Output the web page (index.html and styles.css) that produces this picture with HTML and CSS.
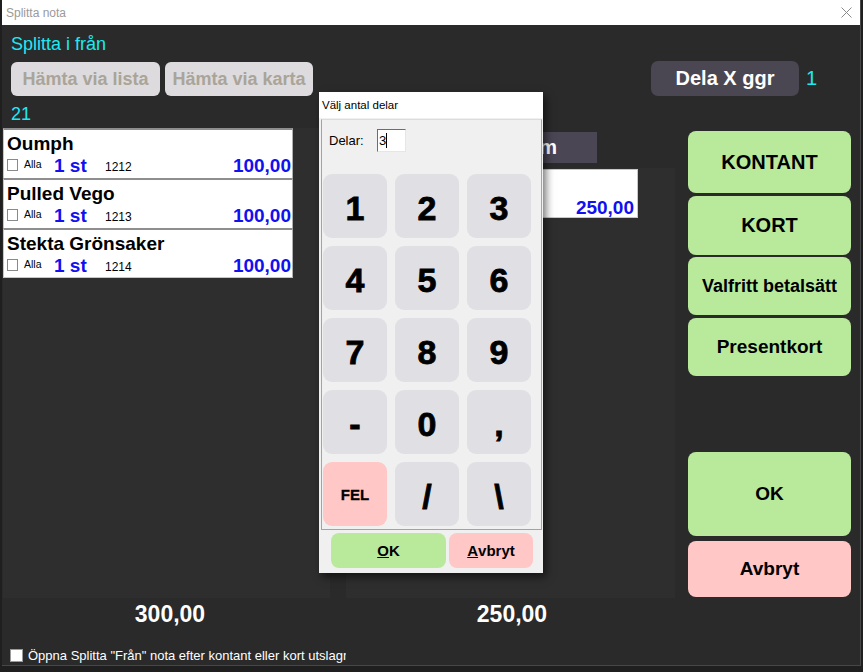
FILE: index.html
```html
<!DOCTYPE html>
<html lang="sv">
<head>
<meta charset="utf-8">
<title>Splitta nota</title>
<link rel="stylesheet" href="styles.css">
</head>
<body>
<div class="window">
  <div class="titlebar">
    <span class="win-title">Splitta nota</span>
    <svg class="close" width="11" height="11" viewBox="0 0 11 11"><path d="M0.5 0.5 L10.5 10.5 M10.5 0.5 L0.5 10.5" stroke="#8a8a8a" stroke-width="1" fill="none"/></svg>
  </div>

  <div class="header">
    <div class="hdr-title">Splitta i från</div>
    <div class="hdr-row">
      <div class="fetch">
        <div class="fetch-btn w1">Hämta via lista</div>
        <div class="fetch-btn w2">Hämta via karta</div>
      </div>
      <div class="dela-wrap">
        <div class="dela-btn">Dela X ggr</div>
        <span class="dela-count">1</span>
      </div>
    </div>
    <div class="count">21</div>
  </div>

  <div class="main">
    <div class="col-left">
      <div class="list">
        <div class="item">
          <div class="item-name">Oumph</div>
          <div class="item-row">
            <span class="chk"></span><span class="alla">Alla</span><span class="qty">1 st</span><span class="code">1212</span><span class="price">100,00</span>
          </div>
        </div>
        <div class="item">
          <div class="item-name">Pulled Vego</div>
          <div class="item-row">
            <span class="chk"></span><span class="alla">Alla</span><span class="qty">1 st</span><span class="code">1213</span><span class="price">100,00</span>
          </div>
        </div>
        <div class="item last">
          <div class="item-name">Stekta Grönsaker</div>
          <div class="item-row">
            <span class="chk"></span><span class="alla">Alla</span><span class="qty">1 st</span><span class="code">1214</span><span class="price">100,00</span>
          </div>
        </div>
      </div>
    </div>

    <div class="col-mid">
      <div class="tab">Till rum</div>
      <div class="mid-panel">
        <div class="mid-item"><span class="price">250,00</span></div>
      </div>
    </div>

    <div class="col-right">
      <div class="pay green b1">KONTANT</div>
      <div class="pay green b2">KORT</div>
      <div class="pay green b3">Valfritt betalsätt</div>
      <div class="pay green b4">Presentkort</div>
      <div class="pay green b5">OK</div>
      <div class="pay pink b6">Avbryt</div>
    </div>
  </div>

  <div class="totals">
    <div class="total t1">300,00</div>
    <div class="total t2">250,00</div>
  </div>

  <div class="footer">
    <span class="fchk"></span>
    <span class="ftext">Öppna Splitta "Från" nota efter kontant eller kort utslagning</span>
  </div>

  <div class="dialog">
    <div class="dlg-title">Välj antal delar</div>
    <div class="dlg-body">
      <div class="group">
        <div class="delar-row">
          <span class="delar-label">Delar:</span>
          <span class="delar-input">3<span class="caret"></span></span>
        </div>
        <div class="keypad">
          <div class="key">1</div>
          <div class="key">2</div>
          <div class="key">3</div>
          <div class="key">4</div>
          <div class="key">5</div>
          <div class="key">6</div>
          <div class="key">7</div>
          <div class="key">8</div>
          <div class="key">9</div>
          <div class="key">-</div>
          <div class="key">0</div>
          <div class="key">,</div>
          <div class="key fel">FEL</div>
          <div class="key">/</div>
          <div class="key">\</div>
        </div>
      </div>
      <div class="dlg-buttons">
        <div class="dlg-btn ok"><u>O</u>K</div>
        <div class="dlg-btn cancel"><u>A</u>vbryt</div>
      </div>
    </div>
  </div>
</div>
</body>
</html>
```
FILE: styles.css
```css
* { box-sizing: border-box; }
body {
  margin: 0;
  width: 863px;
  height: 672px;
  overflow: hidden;
  background: #1f1f1f;
  font-family: "Liberation Sans", Arial, sans-serif;
}
.window {
  position: relative;
  margin-left: 2px;
  width: 859px;
  height: 666px;
  background: #2a2a2a;
  border-right: 1px solid #474747;
  border-bottom: 1px solid #474747;
}
.titlebar {
  height: 25px;
  background: #fff;
  display: flex;
  align-items: center;
  padding: 0 8px 0 4px;
}
.win-title {
  font-size: 12px;
  color: #9a9a9a;
}
.close { margin-left: auto; }

/* header */
.header {
  height: 103px;
  padding: 9px 0 0 9px;
}
.hdr-title, .count {
  font-size: 18px;
  line-height: 20px;
  color: #1ee8f2;
}
.hdr-row {
  display: flex;
  align-items: flex-start;
  margin-top: 7px;
}
.fetch {
  display: flex;
  gap: 5px;
  margin-top: 1px;
}
.fetch-btn {
  height: 34px;
  background: #dddbdd;
  border-radius: 6px;
  color: #aaa499;
  font-weight: bold;
  font-size: 18px;
  display: flex;
  align-items: center;
  justify-content: center;
}
.fetch-btn.w1 { width: 149px; }
.fetch-btn.w2 { width: 148px; }
.dela-wrap {
  display: flex;
  align-items: center;
  margin-left: 338px;
}
.dela-btn {
  width: 148px;
  height: 35px;
  background: #4a4753;
  border-radius: 7px;
  color: #fff;
  font-weight: bold;
  font-size: 20px;
  display: flex;
  align-items: center;
  justify-content: center;
}
.dela-count {
  margin-left: 7px;
  font-size: 20px;
  color: #1ee8f2;
}
.count { margin-top: 8px; }

/* main */
.main {
  display: flex;
  height: 470px;
}
.col-left {
  width: 327px;
  margin-left: 1px;
  background: #2e2e2e;
}
.list { width: 290px; }
.item {
  height: 50px;
  background: #fff;
  border-top: 2px solid #8e8e8e;
  border-left: 1px solid #c6c6c6;
  border-right: 1px solid #b0b0b0;
  padding: 4px 1px 0 3px;
}
.item.last {
  height: 50px;
  border-bottom: 1px solid #c6c6c6;
}
.item-name {
  font-size: 19px;
  line-height: 20px;
  font-weight: bold;
  color: #000;
}
.item-row {
  display: flex;
  align-items: flex-start;
  margin-top: 1px;
  height: 22px;
}
.chk {
  width: 11px;
  height: 12px;
  margin-top: 4px;
  margin-right: 6px;
  background: #fff;
  border: 1px solid #8a8a8a;
}
.alla {
  width: 30px;
  font-size: 10.5px;
  line-height: 12px;
  margin-top: 3px;
  color: #000;
}
.qty {
  width: 51px;
  font-size: 19px;
  line-height: 20px;
  font-weight: bold;
  color: #1010f0;
  margin-top: 1px;
}
.code {
  font-size: 12px;
  line-height: 14px;
  margin-top: 5px;
  color: #000;
}
.price {
  margin-left: auto;
  font-size: 19px;
  line-height: 20px;
  font-weight: bold;
  color: #1010f0;
  margin-top: 1px;
}

.col-mid {
  width: 329px;
  margin-left: 16px;
  display: flex;
  flex-direction: column;
}
.tab {
  width: 251px;
  height: 31px;
  margin-top: 4px;
  background: #4a4654;
  color: #fff;
  font-weight: bold;
  font-size: 20px;
  display: flex;
  align-items: center;
  justify-content: flex-end;
  padding-right: 40px;
}
.mid-panel {
  flex: 1;
  margin-top: 5px;
  background: #2e2e2e;
  padding-top: 1px;
}
.mid-item {
  width: 292px;
  height: 49px;
  background: #fff;
  border: 1px solid #c8c8c8;
  display: flex;
  padding: 27px 3px 0 0;
}

.col-right {
  width: 163px;
  margin-left: 13px;
  display: flex;
  flex-direction: column;
  padding-top: 3px;
}
.pay {
  border-radius: 8px;
  display: flex;
  align-items: center;
  justify-content: center;
  font-weight: bold;
  color: #000;
  font-size: 18px;
}
.green { background: #b9ea9b; }
.pink { background: #ffc7c6; }
.b1 { height: 62px; font-size: 20px; }
.b2 { height: 59px; margin-top: 3px; font-size: 20px; }
.b3 { height: 58px; margin-top: 2px; font-size: 18px; }
.b4 { height: 58px; margin-top: 3px; font-size: 19px; }
.b5 { height: 84px; margin-top: 76px; font-size: 19px; }
.b6 { height: 56px; margin-top: 5px; font-size: 19px; }

/* totals */
.totals {
  display: flex;
  height: 49px;
  padding-top: 3px;
}
.total {
  font-size: 23px;
  line-height: 26px;
  font-weight: bold;
  color: #fff;
  text-align: center;
}
.t1 { width: 327px; margin-left: 1px; padding-left: 7px; }
.t2 { width: 329px; margin-left: 16px; padding-left: 3px; }

/* footer */
.footer {
  display: flex;
  align-items: center;
  padding-left: 8px;
  height: 16px;
}
.fchk {
  width: 13px;
  height: 13px;
  background: #fff;
  border: 1px solid #9a9a9a;
}
.ftext {
  width: 318px;
  margin-left: 5px;
  overflow: hidden;
  white-space: nowrap;
  font-size: 13px;
  color: #fff;
}

/* dialog */
.dialog {
  position: absolute;
  left: 317px;
  top: 92px;
  width: 224px;
  height: 481px;
  background: #f0f0f0;
  box-shadow: 3px 4px 8px rgba(0, 0, 0, 0.55);
}
.dlg-title {
  height: 26px;
  background: #fff;
  font-size: 11.5px;
  color: #000;
  display: flex;
  align-items: center;
  padding-left: 3px;
}
.dlg-body {
  padding: 1px 1px 0 2px;
}
.group {
  border: 1px solid #a3a3a3;
  border-top-color: #dcdcdc;
  padding: 0 0 3px 1px;
}
.delar-row {
  display: flex;
  align-items: center;
  margin-top: 9px;
  padding-left: 6px;
  height: 23px;
}
.delar-label {
  width: 48px;
  font-size: 13px;
  color: #000;
}
.delar-input {
  width: 29px;
  height: 23px;
  background: #fff;
  border: 1px solid;
  border-color: #6d6d6d #e6e6e6 #e6e6e6 #6d6d6d;
  font-size: 13px;
  color: #000;
  display: flex;
  align-items: center;
  padding-left: 1px;
}
.caret {
  width: 1px;
  height: 15px;
  background: #000;
  margin-left: 0;
}
.keypad {
  display: grid;
  grid-template-columns: repeat(3, 64px);
  grid-auto-rows: 64px;
  gap: 8px;
  margin-top: 22px;
}
.key {
  background: #e0dfe3;
  border-radius: 9px;
  display: flex;
  align-items: center;
  justify-content: center;
  padding-top: 4px;
  font-size: 34px;
  font-weight: bold;
  color: #000;
  -webkit-text-stroke: 0.8px #000;
}
.key.fel {
  background: #ffc7c6;
  font-size: 15px;
  -webkit-text-stroke: 0.3px #000;
  padding-top: 0;
}
.dlg-buttons {
  display: flex;
  gap: 3px;
  margin-top: 3px;
  padding-left: 10px;
}
.dlg-btn {
  height: 35px;
  border-radius: 8px;
  display: flex;
  align-items: center;
  justify-content: center;
  font-size: 15px;
  font-weight: bold;
  color: #000;
}
.dlg-btn.ok { width: 115px; background: #b9ea9b; }
.dlg-btn.cancel { width: 84px; background: #ffc7c6; }
```
